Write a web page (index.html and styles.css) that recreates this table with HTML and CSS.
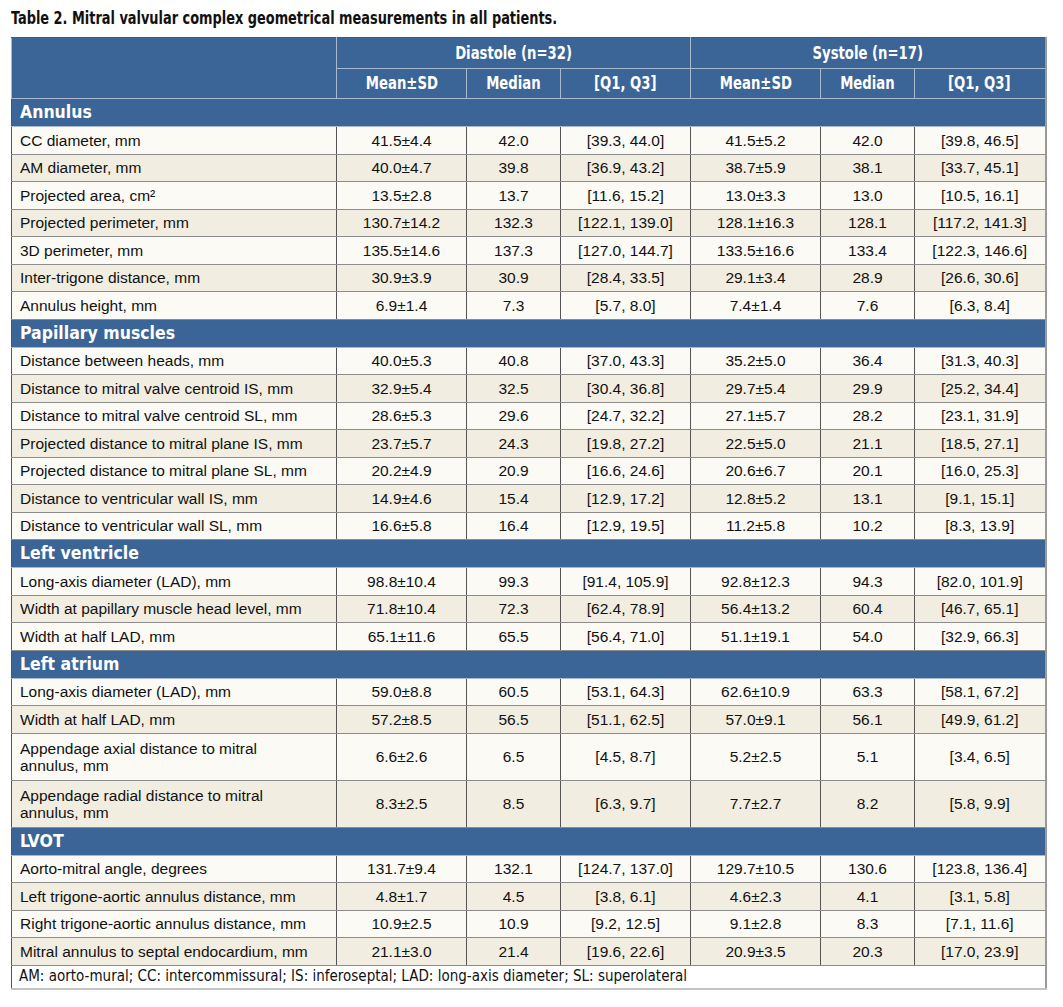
FILE: index.html
```html
<!DOCTYPE html>
<html lang="en">
<head>
<meta charset="utf-8">
<title>Table 2</title>
<link rel="stylesheet" href="styles.css">
</head>
<body>
<div class="page">
  <h1 class="title"><span class="sq">Table 2. Mitral valvular complex geometrical measurements in all patients.</span></h1>
  <table class="data">
    <colgroup>
      <col class="c-label"><col class="c-mean"><col class="c-med"><col class="c-q">
      <col class="c-mean"><col class="c-med"><col class="c-q2">
    </colgroup>
    <thead>
      <tr class="h1">
        <th rowspan="2"></th>
        <th colspan="3"><span class="sq">Diastole (n=32)</span></th>
        <th colspan="3"><span class="sq">Systole (n=17)</span></th>
      </tr>
      <tr class="h2">
        <th><span class="sq">Mean±SD</span></th><th><span class="sq">Median</span></th><th><span class="sq">[Q1, Q3]</span></th>
        <th><span class="sq">Mean±SD</span></th><th><span class="sq">Median</span></th><th><span class="sq">[Q1, Q3]</span></th>
      </tr>
    </thead>
    <tbody>
      <tr class="sec"><td colspan="7">Annulus</td></tr>
      <tr class="w"><td>CC diameter, mm</td><td>41.5±4.4</td><td>42.0</td><td>[39.3, 44.0]</td><td>41.5±5.2</td><td>42.0</td><td>[39.8, 46.5]</td></tr>
      <tr class="b"><td>AM diameter, mm</td><td>40.0±4.7</td><td>39.8</td><td>[36.9, 43.2]</td><td>38.7±5.9</td><td>38.1</td><td>[33.7, 45.1]</td></tr>
      <tr class="w"><td>Projected area, cm²</td><td>13.5±2.8</td><td>13.7</td><td>[11.6, 15.2]</td><td>13.0±3.3</td><td>13.0</td><td>[10.5, 16.1]</td></tr>
      <tr class="b"><td>Projected perimeter, mm</td><td>130.7±14.2</td><td>132.3</td><td>[122.1, 139.0]</td><td>128.1±16.3</td><td>128.1</td><td>[117.2, 141.3]</td></tr>
      <tr class="w"><td>3D perimeter, mm</td><td>135.5±14.6</td><td>137.3</td><td>[127.0, 144.7]</td><td>133.5±16.6</td><td>133.4</td><td>[122.3, 146.6]</td></tr>
      <tr class="b"><td>Inter-trigone distance, mm</td><td>30.9±3.9</td><td>30.9</td><td>[28.4, 33.5]</td><td>29.1±3.4</td><td>28.9</td><td>[26.6, 30.6]</td></tr>
      <tr class="w"><td>Annulus height, mm</td><td>6.9±1.4</td><td>7.3</td><td>[5.7, 8.0]</td><td>7.4±1.4</td><td>7.6</td><td>[6.3, 8.4]</td></tr>

      <tr class="sec"><td colspan="7">Papillary muscles</td></tr>
      <tr class="w"><td>Distance between heads, mm</td><td>40.0±5.3</td><td>40.8</td><td>[37.0, 43.3]</td><td>35.2±5.0</td><td>36.4</td><td>[31.3, 40.3]</td></tr>
      <tr class="b"><td>Distance to mitral valve centroid IS, mm</td><td>32.9±5.4</td><td>32.5</td><td>[30.4, 36.8]</td><td>29.7±5.4</td><td>29.9</td><td>[25.2, 34.4]</td></tr>
      <tr class="w"><td>Distance to mitral valve centroid SL, mm</td><td>28.6±5.3</td><td>29.6</td><td>[24.7, 32.2]</td><td>27.1±5.7</td><td>28.2</td><td>[23.1, 31.9]</td></tr>
      <tr class="b"><td>Projected distance to mitral plane IS, mm</td><td>23.7±5.7</td><td>24.3</td><td>[19.8, 27.2]</td><td>22.5±5.0</td><td>21.1</td><td>[18.5, 27.1]</td></tr>
      <tr class="w"><td>Projected distance to mitral plane SL, mm</td><td>20.2±4.9</td><td>20.9</td><td>[16.6, 24.6]</td><td>20.6±6.7</td><td>20.1</td><td>[16.0, 25.3]</td></tr>
      <tr class="b"><td>Distance to ventricular wall IS, mm</td><td>14.9±4.6</td><td>15.4</td><td>[12.9, 17.2]</td><td>12.8±5.2</td><td>13.1</td><td>[9.1, 15.1]</td></tr>
      <tr class="w"><td>Distance to ventricular wall SL, mm</td><td>16.6±5.8</td><td>16.4</td><td>[12.9, 19.5]</td><td>11.2±5.8</td><td>10.2</td><td>[8.3, 13.9]</td></tr>

      <tr class="sec"><td colspan="7">Left ventricle</td></tr>
      <tr class="w"><td>Long-axis diameter (LAD), mm</td><td>98.8±10.4</td><td>99.3</td><td>[91.4, 105.9]</td><td>92.8±12.3</td><td>94.3</td><td>[82.0, 101.9]</td></tr>
      <tr class="b"><td>Width at papillary muscle head level, mm</td><td>71.8±10.4</td><td>72.3</td><td>[62.4, 78.9]</td><td>56.4±13.2</td><td>60.4</td><td>[46.7, 65.1]</td></tr>
      <tr class="w"><td>Width at half LAD, mm</td><td>65.1±11.6</td><td>65.5</td><td>[56.4, 71.0]</td><td>51.1±19.1</td><td>54.0</td><td>[32.9, 66.3]</td></tr>

      <tr class="sec"><td colspan="7">Left atrium</td></tr>
      <tr class="w"><td>Long-axis diameter (LAD), mm</td><td>59.0±8.8</td><td>60.5</td><td>[53.1, 64.3]</td><td>62.6±10.9</td><td>63.3</td><td>[58.1, 67.2]</td></tr>
      <tr class="b"><td>Width at half LAD, mm</td><td>57.2±8.5</td><td>56.5</td><td>[51.1, 62.5]</td><td>57.0±9.1</td><td>56.1</td><td>[49.9, 61.2]</td></tr>
      <tr class="w dbl"><td>Appendage axial distance to mitral annulus, mm</td><td>6.6±2.6</td><td>6.5</td><td>[4.5, 8.7]</td><td>5.2±2.5</td><td>5.1</td><td>[3.4, 6.5]</td></tr>
      <tr class="b dbl"><td>Appendage radial distance to mitral annulus, mm</td><td>8.3±2.5</td><td>8.5</td><td>[6.3, 9.7]</td><td>7.7±2.7</td><td>8.2</td><td>[5.8, 9.9]</td></tr>

      <tr class="sec"><td colspan="7">LVOT</td></tr>
      <tr class="w"><td>Aorto-mitral angle, degrees</td><td>131.7±9.4</td><td>132.1</td><td>[124.7, 137.0]</td><td>129.7±10.5</td><td>130.6</td><td>[123.8, 136.4]</td></tr>
      <tr class="b"><td>Left trigone-aortic annulus distance, mm</td><td>4.8±1.7</td><td>4.5</td><td>[3.8, 6.1]</td><td>4.6±2.3</td><td>4.1</td><td>[3.1, 5.8]</td></tr>
      <tr class="w"><td>Right trigone-aortic annulus distance, mm</td><td>10.9±2.5</td><td>10.9</td><td>[9.2, 12.5]</td><td>9.1±2.8</td><td>8.3</td><td>[7.1, 11.6]</td></tr>
      <tr class="b"><td>Mitral annulus to septal endocardium, mm</td><td>21.1±3.0</td><td>21.4</td><td>[19.6, 22.6]</td><td>20.9±3.5</td><td>20.3</td><td>[17.0, 23.9]</td></tr>
    </tbody>
    <tfoot>
      <tr class="note"><td colspan="7">AM: aorto-mural; CC: intercommissural; IS: inferoseptal; LAD: long-axis diameter; SL: superolateral</td></tr>
    </tfoot>
  </table>
</div>
</body>
</html>
```

FILE: styles.css
```css
html, body {
  margin: 0;
  padding: 0;
  background: #ffffff;
}

.page {
  padding: 8px 0 0 11px;
}

.title {
  margin: 0 0 8px 0;
  font-family: "DejaVu Sans Condensed", "Liberation Sans", sans-serif;
  font-stretch: condensed;
  font-weight: bold;
  font-size: 17.5px;
  line-height: 21px;
  color: #111111;
  white-space: nowrap;
}

.title .sq {
  display: inline-block;
  transform: scaleX(0.82);
  transform-origin: left center;
}

.data {
  border-collapse: collapse;
  table-layout: fixed;
  width: 1035px;
  font-family: "Liberation Sans", Arial, sans-serif;
  font-size: 15.5px;
  color: #111111;
  border-left: 1px solid #555555;
  border-right: 2px solid #9a9a9a;
}

.c-label { width: 325px; }
.c-mean { width: 130px; }
.c-med { width: 94px; }
.c-q { width: 130px; }
.c-q2 { width: 131px; }

.data th {
  background: #3b6596;
  color: #ffffff;
  font-family: "DejaVu Sans Condensed", "Liberation Sans", sans-serif;
  font-stretch: condensed;
  font-weight: bold;
  font-size: 17.5px;
  text-align: center;
  padding: 0;
  border: 1px solid #a9b9cf;
  white-space: nowrap;
}

.data th .sq {
  display: inline-block;
  transform: scaleX(0.84);
  transform-origin: center center;
}

.data .h1 th {
  height: 29.5px;
  border-top: 1px solid #555555;
}

.data .h2 th {
  height: 29.5px;
}

.data td {
  padding: 0 4px;
  text-align: center;
  border-left: 1px solid #555555;
  border-right: 1px solid #555555;
  border-top: 1px solid #8c8c8c;
  border-bottom: 1px solid #8c8c8c;
  height: 26.5px;
  line-height: 17px;
  white-space: nowrap;
}

.data td:first-child {
  text-align: left;
  padding-left: 8px;
}

.data .w td { background: #fbfaf5; }
.data .b td { background: #f1ede0; }

.data .dbl td { height: 46px; }
.data .dbl td:first-child {
  white-space: normal;
  padding-right: 40px;
  line-height: 17px;
}

.data .sec td {
  background: #3b6596;
  color: #ffffff;
  font-family: "DejaVu Sans Condensed", "Liberation Sans", sans-serif;
  font-stretch: condensed;
  font-weight: bold;
  font-size: 17.5px;
  height: 27px;
  border-top: 1px solid #a9b9cf;
  border-bottom: 1px solid #a9b9cf;
  padding-left: 8px;
}

.data .note td {
  background: #ffffff;
  font-family: "DejaVu Sans Condensed", "Liberation Sans", sans-serif;
  font-stretch: condensed;
  font-size: 15px;
  text-align: left;
  padding-left: 7px;
  height: 22px;
  border-top: 1px solid #555555;
  border-bottom: 2px solid #c4c4c4;
  border-right: 1px solid #9a9a9a;
}
```
